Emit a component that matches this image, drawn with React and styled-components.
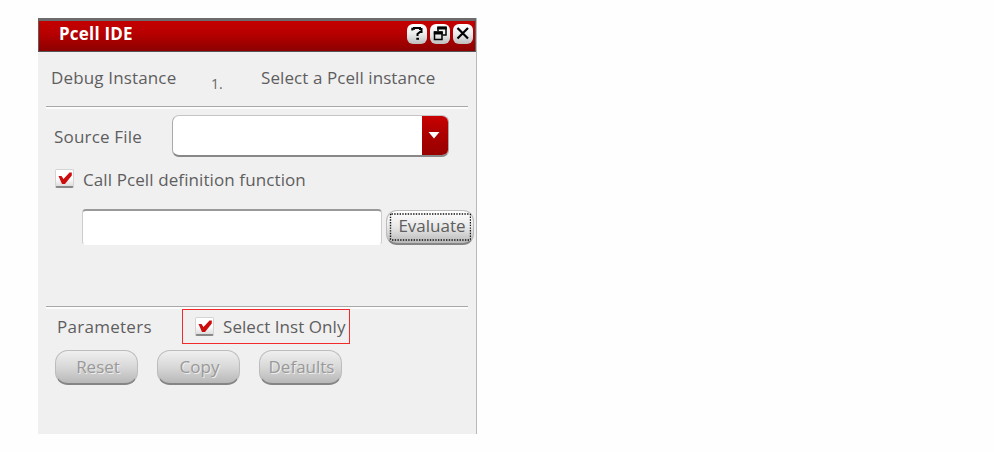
import React from "react";
import styled, { createGlobalStyle } from "styled-components";

const Global = createGlobalStyle`
  * { box-sizing: border-box; }
  body { margin: 0; background: #fefefe; font-family: "Open Sans", "Noto Sans", sans-serif; }
`;

const Page = styled.main`
  width: 994px;
  height: 452px;
  padding: 18px 0 0 38px;
  overflow: hidden;
`;

const Panel = styled.section`
  width: 439px;
  height: 416px;
  display: flex;
  flex-direction: column;
  background: #f1f0f1;
  border-right: 1px solid #b8b8be;
`;

const TitleBar = styled.header`
  height: 34px;
  flex: none;
  display: flex;
  align-items: center;
  justify-content: space-between;
  padding: 0 2px 4px 20px;
  border: 1px solid #5f5f5f;
  border-top: 3px solid #6c6c6c;
  border-bottom: 1px solid #555;
  background: linear-gradient(#c40000, #b80000 40%, #8d0000);
`;

const Title = styled.h1`
  margin: 0;
  color: #fff;
  font-size: 17px;
  line-height: 22px;
  font-weight: 700;
  letter-spacing: 0.2px;
`;

const WindowButtons = styled.div`
  display: flex;
  gap: 3px;
`;

const WindowButton = styled.button`
  width: 20px;
  height: 20px;
  padding: 0;
  border: 0;
  border-radius: 6px;
  background: linear-gradient(#fff, #ececec 50%, #bdbdbd);
  svg { display: block; }
`;

const Row = styled.div`
  display: flex;
  flex: none;
  align-items: center;
  height: ${(p) => p.$h}px;
  padding-left: ${(p) => p.$left}px;
`;

const Label = styled.span`
  flex: none;
  width: ${(p) => p.$w}px;
  white-space: nowrap;
  color: #5e5e5e;
  font-size: 17px;
  line-height: 24px;
  margin-top: ${(p) => p.$drop || 0}px;
  letter-spacing: ${(p) => p.$track || 0}px;
`;

const StepNumber = styled.span`
  width: 50px;
  color: #666;
  font-size: 14px;
  line-height: 20px;
  padding-top: 9px;
`;

const Divider = styled.hr`
  flex: none;
  width: 422px;
  height: 3px;
  margin: 0 0 0 8px;
  border: 0;
  border-top: 1px solid #a8a8a8;
  background: #fcfcfc;
`;

const Combo = styled.div`
  width: 277px;
  height: 42px;
  display: flex;
  overflow: hidden;
  border: 1px solid #aaa;
  border-top-color: #c4c4c4;
  border-bottom: 2px solid #888;
  border-radius: 7px;
  background: #fff;
`;

const ComboArrow = styled.div`
  width: 26px;
  margin-left: auto;
  display: flex;
  justify-content: center;
  padding: 16px 2px 0 0;
  background: linear-gradient(#c80000, #ad0000 45%, #980000);
`;

const CheckBox = styled.span`
  flex: none;
  width: 19px;
  height: 19px;
  margin: -1px ${(p) => p.$gap}px 0 0;
  border: 1px solid #d4d4d4;
  border-bottom: 2px solid #888;
  border-radius: 2px;
  background: linear-gradient(#fff 50%, #ddd);
  svg { display: block; }
`;

const Field = styled.div`
  width: 300px;
  height: 36px;
  margin-right: 4px;
  border: 1px solid #ccc;
  border-top: 2px solid #999;
  border-bottom-color: #fff;
  border-radius: 4px;
  background: #fff;
`;

const Button = styled.button`
  flex: none;
  width: ${(p) => p.$w}px;
  height: 35px;
  padding: 0 0 1px ${(p) => p.$pad || 0}px;
  border: 1px solid #bcbcbc;
  border-bottom: 2px solid #858585;
  border-radius: 13px;
  background: linear-gradient(#f0f0f0, #d8d8d8 50%, #b8b8b8);
  color: #999;
  font: 17px/22px "Open Sans", sans-serif;
  text-shadow: 1px 1px 0 #eee;
`;

const EvaluateButton = styled(Button)`
  display: grid;
  padding: 2px;
  border-radius: 11px;
  background: linear-gradient(#fff, #e8e8e8 50%, #b8b8b8);
  color: #5e5e5e;
  text-shadow: none;
  > * { grid-area: 1 / 1; }
`;

const EvaluateText = styled.span`
  padding: 2px 0 0 4px;
`;

const Highlight = styled.div`
  width: 168px;
  height: 35px;
  display: flex;
  align-items: center;
  padding-left: 12px;
  border: 1px solid #f32a2a;
`;

const ButtonRow = styled(Row)`
  gap: 19px;
`;

const Check = ({ gap }) => (
  <CheckBox $gap={gap}>
    <svg width="17" height="16" viewBox="0 0 17 16">
      <path d="M2.5 6H5.5L7.5 9L13.5 2.5H15.8V5.5L9 14H6Z" fill="#cc0d0d" />
    </svg>
  </CheckBox>
);

export default function App() {
  return (
    <>
      <Global />
      <Page>
        <Panel>
          <TitleBar>
            <Title>Pcell IDE</Title>
            <WindowButtons>
              <WindowButton aria-label="Help">
                <svg width="20" height="20" fill="none" stroke="#000" strokeWidth="2">
                  <path d="M5.3 6.5V4.8H7V4H13V5H14.5V8H13L10.5 10V12" />
                  <path d="M9.3 14.8H12" />
                </svg>
              </WindowButton>
              <WindowButton aria-label="Restore">
                <svg width="20" height="20" fill="none" stroke="#000">
                  <path d="M8 7V3.5H16V11H12.5" strokeWidth="1.5" />
                  <path d="M7.3 4H16.7" strokeWidth="3" />
                  <path d="M4.5 8H12V15.5H4.5Z" strokeWidth="1.5" />
                  <path d="M3.8 9H12.7" strokeWidth="3" />
                </svg>
              </WindowButton>
              <WindowButton aria-label="Close">
                <svg width="20" height="20" stroke="#000" strokeWidth="2.2">
                  <path d="M4.5 4 15 14.5M15 4 4.5 14.5" />
                </svg>
              </WindowButton>
            </WindowButtons>
          </TitleBar>
          <Row $h={54} $left={13}>
            <Label $w={160} $track={0.15} $drop={-2}>Debug Instance</Label>
            <StepNumber>1.</StepNumber>
            <Label $w={200} $track={0.08} $drop={-2}>Select a Pcell instance</Label>
          </Row>
          <Divider />
          <Row $h={54} $left={16}>
            <Label $w={118} $track={0.18} $drop={2}>Source File</Label>
            <Combo>
              <ComboArrow>
                <svg width="12" height="8"><path d="M0.5 0H11.5L6 6.5Z" fill="#fff" /></svg>
              </ComboArrow>
            </Combo>
          </Row>
          <Row $h={32} $left={17}>
            <Check gap={9} />
            <Label $track={0.1} $drop={1}>Call Pcell definition function</Label>
          </Row>
          <Row $h={64} $left={44}>
            <Field />
            <EvaluateButton $w={88}>
              <svg width="82" height="28">
                <rect x="1.5" y="1" width="80" height="26" rx="1" fill="none" stroke="#111" strokeWidth="1.4" strokeDasharray="1.4 1.3" />
              </svg>
              <EvaluateText>Evaluate</EvaluateText>
            </EvaluateButton>
          </Row>
          <Row $h={47} />
          <Divider />
          <Row $h={35} $left={19}>
            <Label $w={125} $track={0.28} $drop={1}>Parameters</Label>
            <Highlight>
              <Check gap={9} />
              <Label $track={0.06} $drop={1}>Select Inst Only</Label>
            </Highlight>
          </Row>
          <ButtonRow $h={47} $left={17}>
            <Button $w={83} $pad={3}>Reset</Button>
            <Button $w={83} $pad={2}>Copy</Button>
            <Button $w={83} $pad={2}>Defaults</Button>
          </ButtonRow>
        </Panel>
      </Page>
    </>
  );
}
